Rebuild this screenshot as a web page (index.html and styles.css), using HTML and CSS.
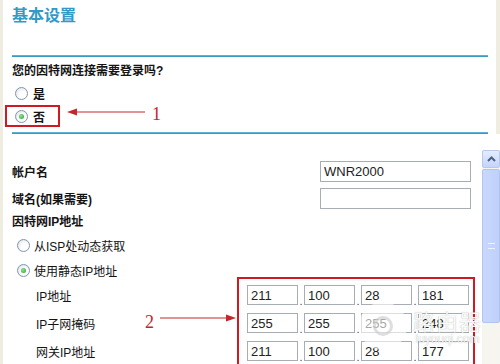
FILE: index.html
```html
<!DOCTYPE html>
<html lang="zh-CN">
<head>
<meta charset="utf-8">
<title>基本设置</title>
<link rel="stylesheet" href="styles.css">
</head>
<body>
<div class="page">
  <header class="top">
    <h1 class="title">基本设置</h1>
    <div class="rule"></div>
    <p class="question">您的因特网连接需要登录吗?</p>
    <div class="radio-row">
      <span class="radio"></span><span class="rlabel">是</span>
    </div>
    <div class="radio-row annotated">
      <div class="redbox"><span class="radio checked"></span><span class="rlabel">否</span></div>
      <svg class="arrow arrow1" width="78" height="10" viewBox="0 0 78 10"><line x1="8" y1="5" x2="78" y2="5" stroke="#c4262c" stroke-width="1.2"/><polygon points="0,5 10,1.5 10,8.5" fill="#c4262c"/></svg>
      <span class="num">1</span>
    </div>
    <div class="rule rule2"></div>
  </header>

  <section class="frame">
    <div class="frame-body">
      <div class="field">
        <span class="field-label">帐户名</span>
        <input class="text-input" type="text" value="WNR2000">
      </div>
      <div class="field field2">
        <span class="field-label">域名(如果需要)</span>
        <input class="text-input" type="text" value="">
      </div>
      <div class="section-label">因特网IP地址</div>
      <div class="opt-row">
        <span class="radio"></span><span class="olabel">从ISP处动态获取</span>
      </div>
      <div class="opt-row opt2">
        <span class="radio checked"></span><span class="olabel">使用静态IP地址</span>
      </div>
      <div class="ip-section">
        <div class="ip-labels">
          <div class="ip-label">IP地址</div>
          <div class="ip-label">
            <span>IP子网掩码</span>
            <span class="anno"><span class="num num2">2</span><svg class="arrow" width="76" height="10" viewBox="0 0 76 10"><line x1="0" y1="5" x2="68" y2="5" stroke="#c4262c" stroke-width="1.2"/><polygon points="76,5 66,1.5 66,8.5" fill="#c4262c"/></svg></span>
          </div>
          <div class="ip-label">网关IP地址</div>
        </div>
        <div class="ip-box">
          <div class="ip-row">
            <input class="ip" value="211"><span class="dot">.</span><input class="ip" value="100"><span class="dot">.</span><input class="ip" value="28"><span class="dot">.</span><input class="ip" value="181">
          </div>
          <div class="ip-row">
            <input class="ip" value="255"><span class="dot">.</span><input class="ip" value="255"><span class="dot">.</span><input class="ip" value="255"><span class="dot">.</span><input class="ip" value="248">
          </div>
          <div class="ip-row">
            <input class="ip" value="211"><span class="dot">.</span><input class="ip" value="100"><span class="dot">.</span><input class="ip" value="28"><span class="dot">.</span><input class="ip" value="177">
          </div>
        </div>
      </div>
    </div>
    <div class="scrollbar">
      <div class="sb-btn"><svg width="9" height="6" viewBox="0 0 9 6"><polyline points="1,5 4.5,1.5 8,5" fill="none" stroke="#4d6185" stroke-width="2"/></svg></div>
      <div class="sb-thumb"><span class="grip"></span></div>
      <div class="sb-track"></div>
    </div>
    <div class="watermark">
      <span class="wm-circle"><span class="wm-ring"></span></span>
      <span class="wm-text"><span class="wm-big">路由器</span><span class="wm-small">luyouqi.com</span></span>
    </div>
  </section>
</div>
</body>
</html>
```

FILE: styles.css
```css
* { box-sizing: border-box; }
html, body { margin: 0; padding: 0; }
body {
  width: 500px;
  height: 364px;
  overflow: hidden;
  background: #fff;
  font-family: "Liberation Sans", "Noto Sans CJK SC", sans-serif;
  font-size: 12px;
  color: #141414;
}
.page {
  height: 364px;
  border-left: 3px solid #efece0;
}
.top {
  padding: 6px 8px 0 9px;
  border-right: 4px solid #efece0;
}
.title {
  margin: 0 0 29px;
  font-size: 16px;
  line-height: 20px;
  height: 20px;
  font-weight: bold;
  color: #3399c6;
}
.rule {
  height: 2px;
  background: #3a9ac6;
  border-top: 1px solid #5fb0d6;
}
.question {
  margin: 6px 0 0;
  line-height: 16px;
  height: 16px;
  font-weight: bold;
}
.radio-row {
  display: flex;
  align-items: center;
  height: 22px;
  margin-top: 3px;
  padding-left: 3px;
}
.radio-row.annotated {
  margin-top: 1px;
  margin-left: -7px;
  padding-left: 0;
  align-items: flex-start;
}
.redbox {
  display: flex;
  align-items: center;
  width: 55px;
  height: 22px;
  border: 2px solid #d21820;
  padding-left: 8px;
}
.radio {
  flex: none;
  width: 13px;
  height: 13px;
  border-radius: 50%;
  border: 1px solid #7f95b2;
  background: radial-gradient(circle at 65% 65%, #ffffff 35%, #d8dcdf 100%);
  display: inline-flex;
  align-items: center;
  justify-content: center;
}
.radio.checked::after {
  content: "";
  width: 5px;
  height: 5px;
  border-radius: 50%;
  background: radial-gradient(circle at 40% 40%, #8ee88a, #1f9b2b);
}
.rlabel {
  margin-left: 5px;
  font-weight: bold;
  font-size: 12px;
}
.arrow { display: block; flex: none; }
.arrow1 { margin: 2px 0 0 7px; }
.num {
  font-family: "Liberation Serif", serif;
  font-size: 18px;
  line-height: 14px;
  color: #c8222a;
  margin: 2px 0 0 7px;
}
.rule2 { margin-top: 5px; }

.frame {
  position: relative;
  display: flex;
  margin-top: 16px;
  height: 214px;
}
.frame-body {
  flex: 1;
  padding: 11px 0 0 9px;
}
.field {
  display: flex;
  align-items: center;
  height: 21px;
}
.field2 { margin-top: 6px; }
.field-label {
  width: 308px;
  font-weight: bold;
}
.text-input {
  width: 151px;
  height: 21px;
  margin: 0;
  border: 1px solid #a6adb5;
  padding: 0 3px;
  font-family: "Liberation Sans", sans-serif;
  font-size: 13px;
  color: #222;
  background: #fff;
  outline: none;
}
.section-label {
  margin-top: 5px;
  height: 16px;
  line-height: 16px;
  font-weight: bold;
}
.opt-row {
  display: flex;
  align-items: center;
  height: 14px;
  margin-top: 8px;
  padding-left: 5px;
}
.opt-row.opt2 { margin-top: 11px; }
.olabel { margin-left: 4px; }

.ip-section {
  display: flex;
}
.ip-labels {
  width: 225px;
  padding: 8px 0 0 24px;
  display: flex;
  flex-direction: column;
  gap: 8px;
}
.ip-label {
  display: flex;
  align-items: center;
  height: 20px;
}
.anno {
  margin-left: auto;
  margin-right: 1px;
  align-self: flex-start;
  display: flex;
  align-items: flex-start;
}
.num2 { margin: 2px 6px 0 0; }
.anno .arrow { margin-top: 0; }
.ip-box {
  width: 238px;
  height: 95px;
  border: 2px solid #d21820;
  padding: 6px 4px 0 8px;
  display: flex;
  flex-direction: column;
  gap: 8px;
}
.ip-row {
  display: flex;
  align-items: flex-end;
}
.ip {
  width: 51px;
  height: 20px;
  margin: 0;
  border: 1px solid #a6adb5;
  padding: 0 3px;
  font-family: "Liberation Sans", sans-serif;
  font-size: 13px;
  color: #222;
  background: #fff;
  outline: none;
}
.dot {
  width: 6px;
  text-align: center;
  font-size: 11px;
  line-height: 8px;
  color: #444;
}

.scrollbar {
  width: 18px;
  flex: none;
  display: flex;
  flex-direction: column;
  background: #f6f5ef;
}
.sb-btn {
  height: 18px;
  border: 1px solid #b7c8f3;
  border-radius: 2px;
  background: linear-gradient(#e4ecfe, #c4d5fb);
  display: flex;
  align-items: center;
  justify-content: center;
}
.sb-thumb {
  height: 154px;
  margin-top: 1px;
  border: 1px solid #b1c4f2;
  border-radius: 2px;
  background: linear-gradient(90deg, #c9d8fc, #bfd1fb);
  display: flex;
  align-items: center;
  justify-content: center;
}
.grip {
  width: 7px;
  height: 6px;
  border-top: 1px solid #eef3ff;
  border-bottom: 1px solid #eef3ff;
}
.sb-track { flex: 1; }

.watermark {
  position: absolute;
  left: 356px;
  top: 152px;
  display: flex;
  align-items: center;
  gap: 6px;
  pointer-events: none;
}
.wm-circle {
  width: 48px;
  height: 48px;
  border-radius: 50%;
  background: rgba(255, 255, 255, 0.6);
  display: flex;
  align-items: center;
  justify-content: center;
}
.wm-ring {
  width: 20px;
  height: 20px;
  border-radius: 50%;
  border: 3px solid rgba(200, 200, 200, 0.6);
}
.wm-text {
  display: flex;
  flex-direction: column;
  align-items: center;
  color: rgba(255, 255, 255, 0.95);
  text-shadow: 0 0 1px rgba(0, 0, 0, 0.35);
}
.wm-big {
  font-family: "Noto Sans CJK SC", sans-serif;
  font-size: 22px;
  line-height: 26px;
  letter-spacing: 1px;
}
.wm-small {
  font-family: "Liberation Sans", sans-serif;
  font-size: 12px;
  line-height: 12px;
}
```
